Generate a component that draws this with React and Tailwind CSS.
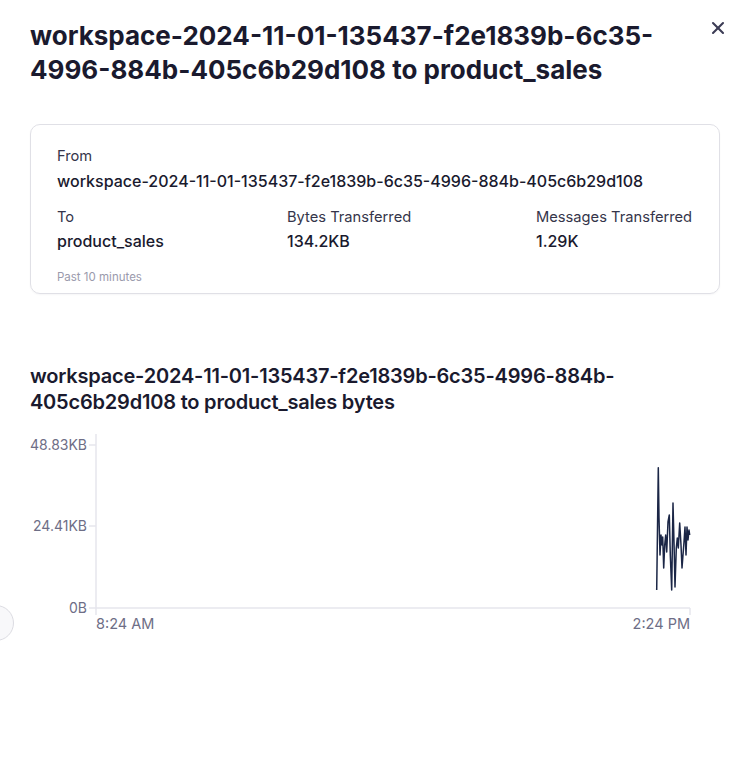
import { X } from "lucide-react";

const points = [
  [656.7, 590], [658.3, 467.7], [659, 518], [660, 555], [661, 535], [662, 545],
  [662.7, 537], [663.7, 568], [664.7, 545], [665.7, 535], [666.7, 552], [668, 522],
  [669.3, 515], [670.3, 555], [671.7, 590], [673, 503], [674, 542], [675, 587],
  [676.3, 548], [677.3, 538], [678.3, 548], [679.7, 523], [681, 545], [682, 568],
  [683, 555], [684, 542], [685, 527], [686, 555], [687, 527], [688, 540],
  [689, 530], [689.7, 535],
];

function BytesChart() {
  // svg starts at page x=20, y=430
  const line = points.map(([x, y]) => `${(x - 20).toFixed(1)},${y - 430}`).join(" ");
  const yTicks = [
    { label: "48.83KB", y: 15 },
    { label: "24.41KB", y: 96 },
    { label: "0B", y: 178 },
  ];

  return (
    <svg width="700" height="210" className="block font-['Inter',sans-serif]">
      <line x1="76" y1="4" x2="76" y2="178" stroke="#e6e6ec" strokeWidth="1.5" />
      <line x1="76" y1="178" x2="670" y2="178" stroke="#e6e6ec" strokeWidth="1.5" />
      <line x1="670" y1="178" x2="670" y2="185" stroke="#e6e6ec" strokeWidth="1.5" />
      <line x1="76" y1="178" x2="76" y2="185" stroke="#e6e6ec" strokeWidth="1.5" />
      {yTicks.map((t) => (
        <g key={t.label}>
          <line x1="69" y1={t.y} x2="76" y2={t.y} stroke="#e6e6ec" strokeWidth="1.5" />
          <text x="67" y={t.y} dy="0.35em" textAnchor="end" fontSize="14" fill="#6e6e86">
            {t.label}
          </text>
        </g>
      ))}
      <text x="76" y="194" dy="0.35em" textAnchor="start" fontSize="14.5" fill="#6e6e86">
        8:24 AM
      </text>
      <text x="670" y="194" dy="0.35em" textAnchor="end" fontSize="14.5" fill="#6e6e86">
        2:24 PM
      </text>
      <polyline points={line} fill="none" stroke="#1b2646" strokeWidth="1.5" strokeLinejoin="round" />
    </svg>
  );
}

export default function App() {
  return (
    <div className="relative min-h-[760px] w-[754px] overflow-hidden bg-white font-['Inter',sans-serif] text-[#1a1a2e]">
      <div className="absolute left-[-22px] top-[605px] h-9 w-9 rounded-full border border-[#dcdce2] bg-[#f8f8fa]" />

      <button className="absolute right-[26px] top-[18px] text-[#3c3c55]">
        <X size={20} strokeWidth={2.5} />
      </button>

      <div className="pl-[30px] pr-[34px] pt-[19px]">
        <h1 className="w-[660px] text-[26px] font-bold leading-[34px]">
          workspace-2024-11-01-135437-f2e1839b-6c35-4996-884b-405c6b29d108 to product_sales
        </h1>

        <section className="mt-[37px] rounded-[10px] border border-[#e0e0e6] px-[26px] pb-[8px] pt-[21px] shadow-[0_1px_2px_rgba(20,20,40,0.04)]">
          <p className="text-[14.7px] leading-5 text-[#35354a]">From</p>
          <p className="mt-[5px] text-[16px] font-medium leading-5">
            workspace-2024-11-01-135437-f2e1839b-6c35-4996-884b-405c6b29d108
          </p>
          <div className="mt-4 grid grid-cols-[230px_249px_1fr]">
            <div>
              <p className="text-[14.7px] leading-5 text-[#35354a]">To</p>
              <p className="mt-1 text-[16px] font-medium leading-5">product_sales</p>
            </div>
            <div>
              <p className="text-[14.7px] leading-5 text-[#35354a]">Bytes Transferred</p>
              <p className="mt-1 text-[16px] font-medium leading-5">134.2KB</p>
            </div>
            <div>
              <p className="whitespace-nowrap text-[14.7px] leading-5 text-[#35354a]">Messages Transferred</p>
              <p className="mt-1 text-[16px] font-medium leading-5">1.29K</p>
            </div>
          </div>
          <p className="mt-[18px] text-[11.5px] leading-4 text-[#9a9aac]">Past 10 minutes</p>
        </section>

        <h2 className="mt-[69px] w-[640px] text-[20px] font-semibold leading-[26px] tracking-[-0.01em]">
          workspace-2024-11-01-135437-f2e1839b-6c35-4996-884b-405c6b29d108 to product_sales bytes
        </h2>
      </div>

      <div className="ml-[20px] mt-[15px]">
        <BytesChart />
      </div>
    </div>
  );
}
